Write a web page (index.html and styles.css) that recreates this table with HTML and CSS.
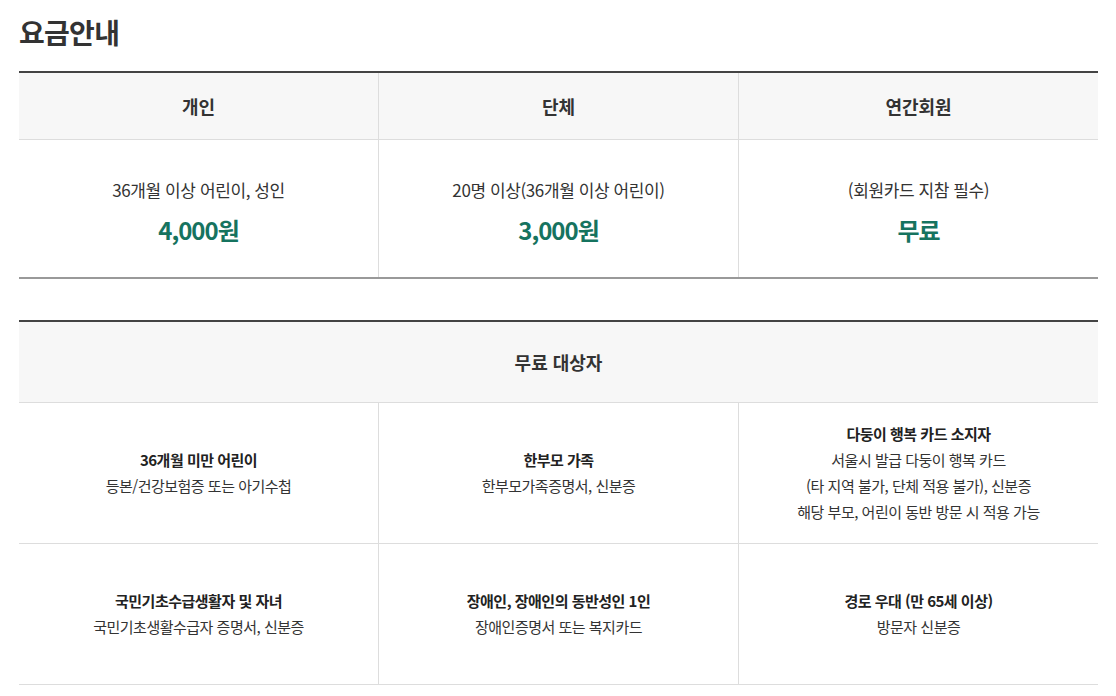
FILE: index.html
```html
<!DOCTYPE html>
<html lang="ko">
<head>
<meta charset="utf-8">
<title>요금안내</title>
<link rel="stylesheet" href="styles.css">
</head>
<body>
<div class="page">
  <h2 class="title">요금안내</h2>

  <div class="fee">
    <div class="fee-head">
      <div class="cell th">개인</div>
      <div class="cell th">단체</div>
      <div class="cell th">연간회원</div>
    </div>
    <div class="fee-body">
      <div class="cell td">
        <p class="desc">36개월 이상 어린이, 성인</p>
        <p class="price">4,000원</p>
      </div>
      <div class="cell td">
        <p class="desc">20명 이상(36개월 이상 어린이)</p>
        <p class="price">3,000원</p>
      </div>
      <div class="cell td">
        <p class="desc">(회원카드 지참 필수)</p>
        <p class="price">무료</p>
      </div>
    </div>
  </div>

  <div class="free">
    <div class="free-head">무료 대상자</div>
    <div class="free-row">
      <div class="cell fd">
        <strong>36개월 미만 어린이</strong>
        <span>등본/건강보험증 또는 아기수첩</span>
      </div>
      <div class="cell fd">
        <strong>한부모 가족</strong>
        <span>한부모가족증명서, 신분증</span>
      </div>
      <div class="cell fd">
        <strong>다둥이 행복 카드 소지자</strong>
        <span>서울시 발급 다둥이 행복 카드</span>
        <span>(타 지역 불가, 단체 적용 불가), 신분증</span>
        <span>해당 부모, 어린이 동반 방문 시 적용 가능</span>
      </div>
    </div>
    <div class="free-row">
      <div class="cell fd">
        <strong>국민기초수급생활자 및 자녀</strong>
        <span>국민기초생활수급자 증명서, 신분증</span>
      </div>
      <div class="cell fd">
        <strong>장애인, 장애인의 동반성인 1인</strong>
        <span>장애인증명서 또는 복지카드</span>
      </div>
      <div class="cell fd">
        <strong>경로 우대 (만 65세 이상)</strong>
        <span>방문자 신분증</span>
      </div>
    </div>
  </div>
</div>
</body>
</html>
```

FILE: styles.css
```css
* { box-sizing: border-box; }
html, body { margin: 0; padding: 0; background: #fff; }
body {
  font-family: "Noto Sans CJK KR", "Noto Sans", sans-serif;
  color: #333;
}
.page {
  padding: 12px 0 0 19px;
  width: 1098px;
}
.title {
  margin: 0;
  font-size: 28px;
  line-height: 40px;
  font-weight: 700;
  color: #333;
  letter-spacing: -0.7px;
}
.fee {
  margin-top: 19px;
  border-top: 2px solid #444;
  border-bottom: 2px solid #999;
}
.fee-head, .fee-body, .free-row {
  display: grid;
  grid-template-columns: 359px 360px 360px;
}
.cell { border-left: 1px solid #ddd; }
.cell:first-child { border-left: none; }
.th {
  height: 67px;
  background: #f7f7f7;
  border-bottom: 1px solid #ddd;
  display: flex;
  align-items: center;
  justify-content: center;
  font-size: 18px;
  font-weight: 700;
  color: #333;
}
.td {
  height: 137px;
  display: flex;
  flex-direction: column;
  align-items: center;
  justify-content: center;
  padding-top: 8px;
}
.desc {
  margin: 0;
  font-size: 17px;
  line-height: 24px;
  color: #333;
  letter-spacing: -0.4px;
}
.price {
  margin: 11px 0 0;
  font-size: 24px;
  line-height: 34px;
  font-weight: 700;
  color: #16735f;
  letter-spacing: -1px;
}
.free {
  margin-top: 41px;
  border-top: 2px solid #444;
}
.free-head {
  height: 81px;
  background: #f7f7f7;
  border-bottom: 1px solid #ddd;
  display: flex;
  align-items: center;
  justify-content: center;
  font-size: 18px;
  font-weight: 700;
  color: #333;
}
.free-row { border-bottom: 1px solid #ddd; }
.fd {
  height: 140px;
  display: flex;
  flex-direction: column;
  align-items: center;
  justify-content: center;
  font-size: 15px;
  line-height: 26px;
  letter-spacing: -0.5px;
  color: #333;
}
.fd strong { font-weight: 700; color: #222; }
```
